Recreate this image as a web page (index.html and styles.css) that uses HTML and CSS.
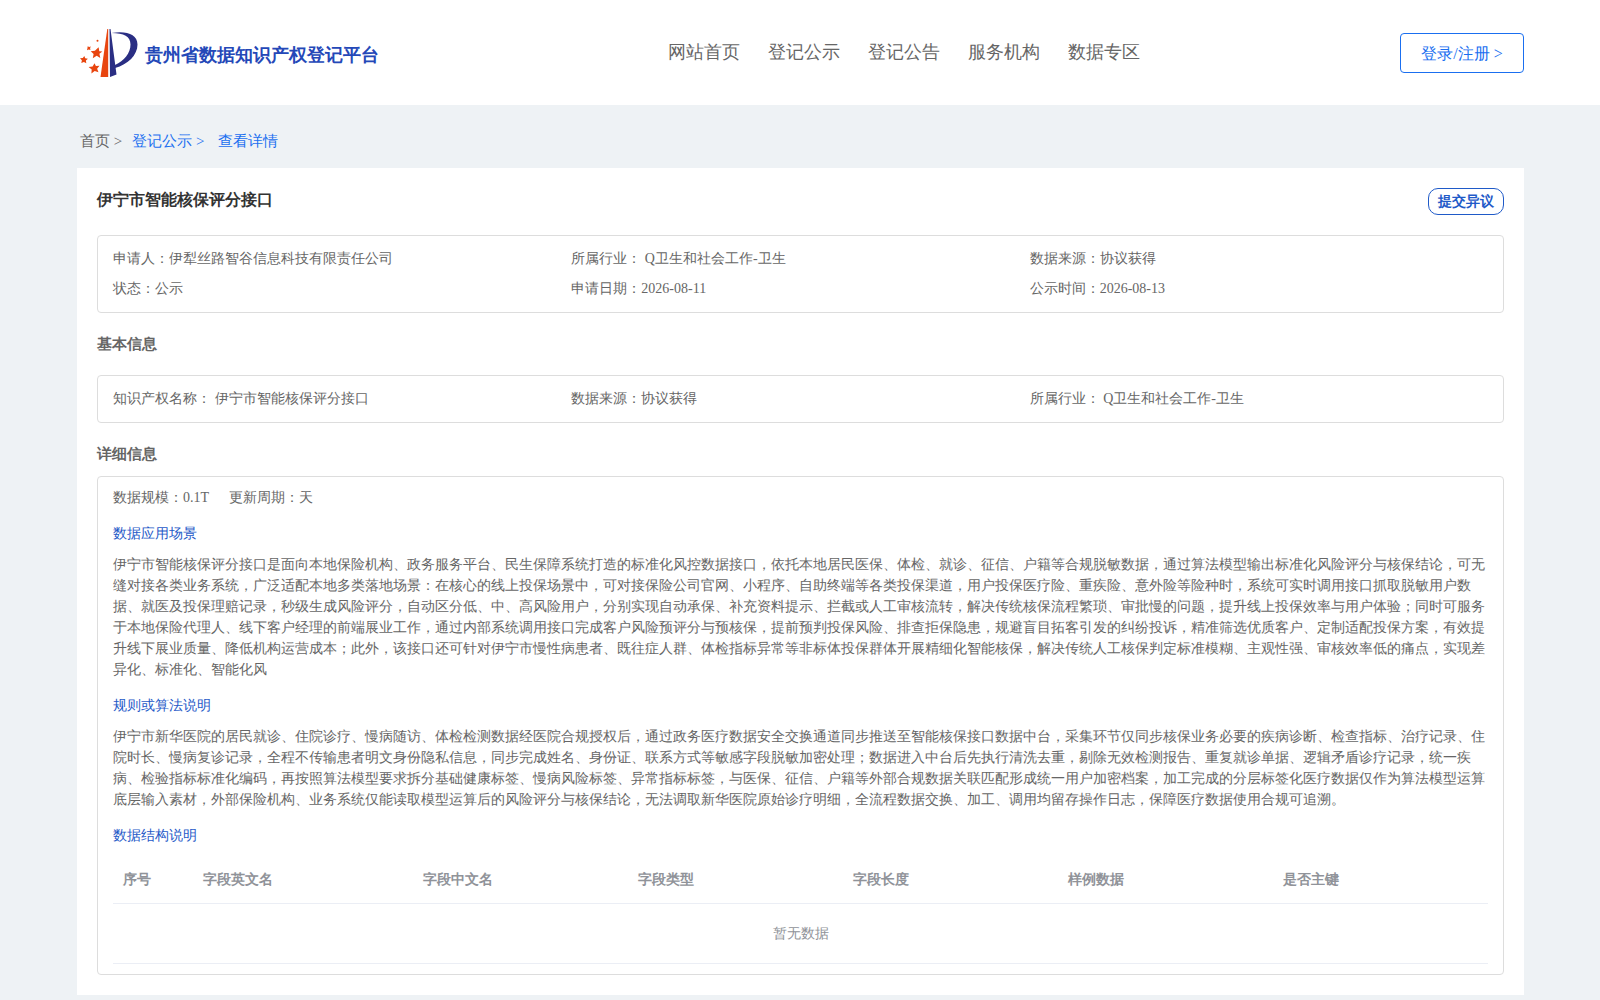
FILE: index.html
```html
<!DOCTYPE html>
<html lang="zh">
<head>
<meta charset="utf-8">
<meta name="viewport" content="width=device-width, initial-scale=1">
<title>贵州省数据知识产权登记平台</title>
<link rel="stylesheet" href="styles.css">
</head>
<body>
<header class="header">
  <a class="brand" href="#">
    <svg class="brand-logo" viewBox="0 0 64 58" width="64" height="58" aria-hidden="true">
      <path fill="#e8450f" d="M31.3 5h.9v48H24.500z"/>
      <path fill="#2a2e83" d="M33.500 5h1L37.500 28 40.500 50.500 34 53z"/>
      <path fill="#2a2e83" d="M35.500 9C50 6.500 61.500 10 61.500 20.500 61.500 31 52 40.500 39 44V41C48 37 54.500 29 54.500 20.500 54.500 12.500 48 9 35.500 9z"/>
      <path fill="#e8450f" d="M22.600 23.300l.7 3.900 3.100.4-3 2.100.9 4.200-3.600-2.200-3.900 2.600.8-4.400-2.900-2.700 4.200-.5z"/>
      <path fill="#e8450f" d="M18.500 39.200l1.400 2.900 3.600-.3-2.400 2.900 1.400 3.600-3.800-1.400-3.300 2.500.3-4-3.100-2.500 4-.5z"/>
      <path fill="#e8450f" d="M8.300 32l.9 2.300 2.700.4-2 1.800.4 2.700-2.400-1.300-2.600 1.100.6-2.700-1.900-2.100 2.800-.2z"/>
      <path fill="#e8450f" d="M11.700 22.200l1.400.7 1.800-.5-.8 1.700.3 1.800-1.700-.4-1.700.8.4-1.900z"/>
      <circle fill="#e8450f" cx="21.500" cy="16.800" r="1"/>
    </svg>
    <span class="brand-name">贵州省数据知识产权登记平台</span>
  </a>
  <nav class="nav">
    <a href="#">网站首页</a>
    <a href="#">登记公示</a>
    <a href="#">登记公告</a>
    <a href="#">服务机构</a>
    <a href="#">数据专区</a>
  </nav>
  <button class="login" type="button">登录/注册 &gt;</button>
</header>
<main class="main">
  <nav class="crumbs">
    <a href="#">首页 &gt;</a>
    <a class="crumb-active" href="#">登记公示 &gt;</a>
    <a class="crumb-active crumb-last" href="#">查看详情</a>
  </nav>
  <article class="panel">
    <div class="panel-head">
      <h1 class="title">伊宁市智能核保评分接口</h1>
      <button class="objection" type="button">提交异议</button>
    </div>
    <div class="box info-grid">
      <div>申请人：伊犁丝路智谷信息科技有限责任公司</div>
      <div>所属行业： Q卫生和社会工作-卫生</div>
      <div>数据来源：协议获得</div>
      <div>状态：公示</div>
      <div>申请日期：2026-08-11</div>
      <div>公示时间：2026-08-13</div>
    </div>
    <h2 class="section-title">基本信息</h2>
    <div class="box info-grid">
      <div>知识产权名称： 伊宁市智能核保评分接口</div>
      <div>数据来源：协议获得</div>
      <div>所属行业： Q卫生和社会工作-卫生</div>
    </div>
    <h2 class="section-title section-title-tight">详细信息</h2>
    <div class="box detail">
      <div class="summary"><span>数据规模：0.1T</span><span>更新周期：天</span></div>
      <h3 class="sub-title">数据应用场景</h3>
      <p class="text">伊宁市智能核保评分接口是面向本地保险机构、政务服务平台、民生保障系统打造的标准化风控数据接口，依托本地居民医保、体检、就诊、征信、户籍等合规脱敏数据，通过算法模型输出标准化风险评分与核保结论，可无缝对接各类业务系统，广泛适配本地多类落地场景：在核心的线上投保场景中，可对接保险公司官网、小程序、自助终端等各类投保渠道，用户投保医疗险、重疾险、意外险等险种时，系统可实时调用接口抓取脱敏用户数据、就医及投保理赔记录，秒级生成风险评分，自动区分低、中、高风险用户，分别实现自动承保、补充资料提示、拦截或人工审核流转，解决传统核保流程繁琐、审批慢的问题，提升线上投保效率与用户体验；同时可服务于本地保险代理人、线下客户经理的前端展业工作，通过内部系统调用接口完成客户风险预评分与预核保，提前预判投保风险、排查拒保隐患，规避盲目拓客引发的纠纷投诉，精准筛选优质客户、定制适配投保方案，有效提升线下展业质量、降低机构运营成本；此外，该接口还可针对伊宁市慢性病患者、既往症人群、体检指标异常等非标体投保群体开展精细化智能核保，解决传统人工核保判定标准模糊、主观性强、审核效率低的痛点，实现差异化、标准化、智能化风</p>
      <h3 class="sub-title">规则或算法说明</h3>
      <p class="text">伊宁市新华医院的居民就诊、住院诊疗、慢病随访、体检检测数据经医院合规授权后，通过政务医疗数据安全交换通道同步推送至智能核保接口数据中台，采集环节仅同步核保业务必要的疾病诊断、检查指标、治疗记录、住院时长、慢病复诊记录，全程不传输患者明文身份隐私信息，同步完成姓名、身份证、联系方式等敏感字段脱敏加密处理；数据进入中台后先执行清洗去重，剔除无效检测报告、重复就诊单据、逻辑矛盾诊疗记录，统一疾病、检验指标标准化编码，再按照算法模型要求拆分基础健康标签、慢病风险标签、异常指标标签，与医保、征信、户籍等外部合规数据关联匹配形成统一用户加密档案，加工完成的分层标签化医疗数据仅作为算法模型运算底层输入素材，外部保险机构、业务系统仅能读取模型运算后的风险评分与核保结论，无法调取新华医院原始诊疗明细，全流程数据交换、加工、调用均留存操作日志，保障医疗数据使用合规可追溯。</p>
      <h3 class="sub-title">数据结构说明</h3>
      <table class="table">
        <thead>
          <tr>
            <th class="col-index">序号</th>
            <th class="col-name">字段英文名</th>
            <th>字段中文名</th>
            <th>字段类型</th>
            <th>字段长度</th>
            <th>样例数据</th>
            <th>是否主键</th>
          </tr>
        </thead>
        <tbody>
          <tr><td class="empty" colspan="7">暂无数据</td></tr>
        </tbody>
      </table>
    </div>
  </article>
</main>
</body>
</html>
```
FILE: styles.css
```css
* {
  box-sizing: border-box;
}

body {
  margin: 0;
  background: #eef2f5;
  color: #666;
  font-family: "Liberation Serif", serif;
  font-size: 14px;
  line-height: 21px;
}

a {
  color: inherit;
  text-decoration: none;
}

button {
  background: #fff;
  font-family: inherit;
  cursor: pointer;
}

h1, h2, h3, p {
  margin: 0;
}

.header {
  display: grid;
  grid-template-columns: 37fr auto 24fr;
  align-items: center;
  height: 105px;
  padding: 0 76px;
  background: #fff;
}

.brand {
  display: flex;
  align-items: center;
  gap: 5px;
}

.brand-name {
  padding-top: 4px;
  color: #2448b8;
  font-size: 18px;
  font-weight: bold;
  line-height: 24px;
}

.nav {
  display: flex;
  gap: 28px;
  padding-bottom: 2px;
  font-size: 18px;
  line-height: 24px;
}

.login {
  justify-self: end;
  width: 124px;
  height: 40px;
  padding: 3px 0 0;
  border: 1px solid #1a6ff0;
  border-radius: 4px;
  color: #1a6ff0;
  font-size: 16px;
}

.main {
  padding: 0 76px 5px 77px;
}

.crumbs {
  display: flex;
  gap: 10px;
  height: 63px;
  padding: 26px 3px 0;
  font-size: 15px;
}

.crumb-active {
  color: #1a6ff0;
}

.crumb-last {
  padding-left: 4px;
}

.panel {
  padding: 20px;
  background: #fff;
}

.panel-head {
  display: flex;
  justify-content: space-between;
  height: 47px;
}

.title {
  color: #333;
  font-size: 16px;
  line-height: 24px;
}

.objection {
  width: 76px;
  height: 27px;
  padding: 0;
  border: 1px solid #1f5ac8;
  border-radius: 10px;
  color: #1f5ac8;
  font-size: 14px;
  font-weight: bold;
}

.box {
  border: 1px solid #ddd;
  border-radius: 4px;
}

.info-grid {
  display: grid;
  grid-template-columns: repeat(3, 1fr);
  padding: 8px 15px;
  line-height: 30px;
}

.section-title {
  height: 62px;
  padding-top: 21px;
  font-size: 15px;
  line-height: 21px;
}

.section-title-tight {
  height: 53px;
}

.detail {
  padding: 10px 15px;
}

.summary {
  display: flex;
  gap: 20px;
}

.sub-title {
  margin: 15px 0 10px;
  color: #1f5ac8;
  font-size: 14px;
  font-weight: normal;
}

.table {
  width: 100%;
  border-collapse: separate;
  border-spacing: 0;
  table-layout: fixed;
  color: #909399;
}

.table th {
  height: 48px;
  padding: 0 10px;
  border-bottom: 1px solid #ebeef5;
  text-align: left;
}

.table .col-index {
  width: 80px;
}

.table .col-name {
  width: 220px;
}

.table .empty {
  height: 60px;
  padding: 0;
  border-bottom: 1px solid #ebeef5;
  text-align: center;
}
```
